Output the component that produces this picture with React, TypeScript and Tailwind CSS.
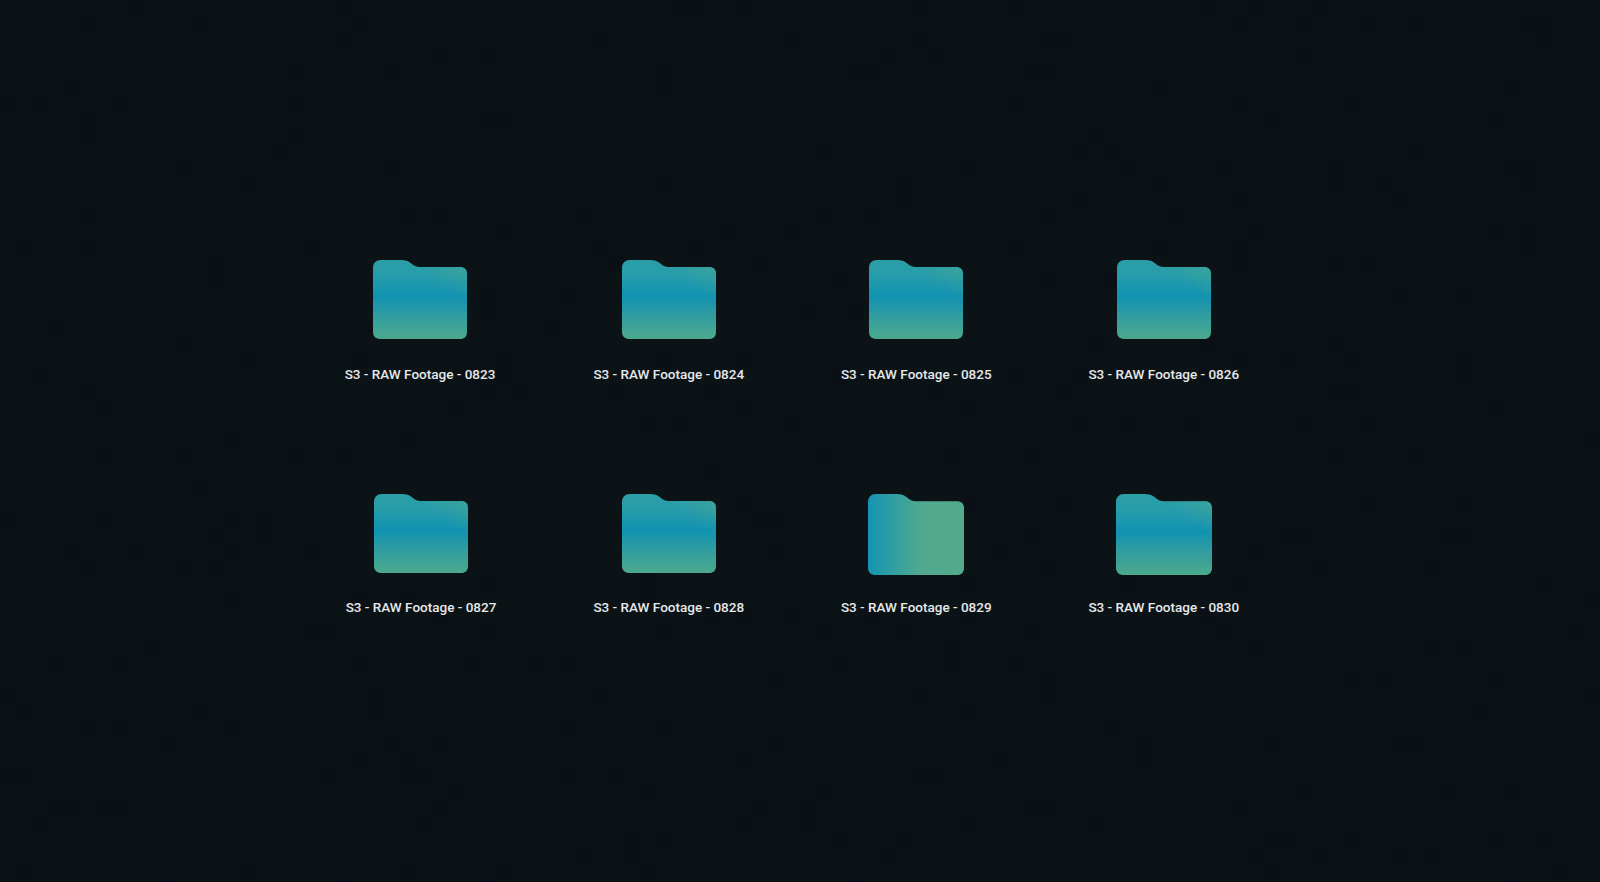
const font = { fontFamily: "Roboto, sans-serif" };

type Item = {
  label: string;
  columnClass: string;
  width: number;
  height: number;
  variant?: "side";
};

function Folder({ id, width, height, variant }: { id: string; width: number; height: number; variant?: "side" }) {
  const shape =
    "M8 0H28C32.5 0 35 1 38 3.2C41 5.6 43 7 47 7H87C91.5 7 94 9.5 94 13.5V71C94 75.5 91.5 78 87 78H8C3 78 0 75.5 0 71V8C0 3 3 0 8 0Z";
  return (
    <svg width={width} height={height} viewBox="0 0 94 78" preserveAspectRatio="none" className="block">
      <defs>
        {variant === "side" ? (
          <linearGradient id={id} x1="0" y1="0" x2="1" y2="0">
            <stop offset="0" stopColor="#1594b2" />
            <stop offset="0.22" stopColor="#2c9ca4" />
            <stop offset="0.55" stopColor="#50a98e" />
            <stop offset="1" stopColor="#53aa8c" />
          </linearGradient>
        ) : (
          <linearGradient id={id} x1="0" y1="0" x2="0" y2="1">
            <stop offset="0" stopColor="#2a9fa8" />
            <stop offset="0.18" stopColor="#289daa" />
            <stop offset="0.46" stopColor="#1192b2" />
            <stop offset="0.72" stopColor="#329d9f" />
            <stop offset="1" stopColor="#4ca98c" />
          </linearGradient>
        )}
        <linearGradient id={`${id}-glow`} x1="1" y1="0" x2="0.72" y2="0.3">
          <stop offset="0" stopColor="#53aa8c" stopOpacity="0.5" />
          <stop offset="1" stopColor="#53aa8c" stopOpacity="0" />
        </linearGradient>
      </defs>
      <path d={shape} fill={`url(#${id})`} />
      {variant !== "side" && <path d={shape} fill={`url(#${id}-glow)`} />}
    </svg>
  );
}

const rowOne: Item[] = [
  { label: "S3 - RAW Footage - 0823", columnClass: "w-[250px]", width: 94, height: 79 },
  { label: "S3 - RAW Footage - 0824", columnClass: "w-[247.5px]", width: 94, height: 79 },
  { label: "S3 - RAW Footage - 0825", columnClass: "w-[247.5px]", width: 94, height: 79 },
  { label: "S3 - RAW Footage - 0826", columnClass: "w-[247.5px]", width: 94, height: 79 },
];

const rowTwo: Item[] = [
  { label: "S3 - RAW Footage - 0827", columnClass: "ml-[2px] w-[248px]", width: 94, height: 79 },
  { label: "S3 - RAW Footage - 0828", columnClass: "w-[247.5px]", width: 94, height: 79 },
  { label: "S3 - RAW Footage - 0829", columnClass: "w-[247.5px]", width: 96, height: 81, variant: "side" },
  { label: "S3 - RAW Footage - 0830", columnClass: "w-[247.5px]", width: 96, height: 81 },
];

function Row({ items, prefix, labelClass }: { items: Item[]; prefix: string; labelClass: string }) {
  return (
    <div className="flex">
      {items.map((item, i) => (
        <div key={item.label} className={`flex flex-col items-center ${item.columnClass}`}>
          <div className="h-[80px] w-[96px] flex items-start justify-center">
            <Folder id={`${prefix}${i}`} width={item.width} height={item.height} variant={item.variant} />
          </div>
          <div className={`${labelClass} text-[13.5px] leading-[16px] font-medium text-[#e6e9ea] whitespace-nowrap`}>
            {item.label}
          </div>
        </div>
      ))}
    </div>
  );
}

// Faint blocky compression texture of the background.
function Texture() {
  const cells: { x: number; y: number }[] = [];
  let seed = 48271;
  for (let y = 0; y < 56; y++) {
    for (let x = 0; x < 100; x++) {
      seed = (seed * 16807) % 2147483647;
      if (seed % 100 < 7) cells.push({ x: x * 16, y: y * 16 });
    }
  }
  return (
    <svg width={1600} height={882} className="absolute inset-0 block">
      {cells.map((c) => (
        <rect key={`${c.x}-${c.y}`} x={c.x} y={c.y} width={16} height={16} fill="#0a1016" />
      ))}
    </svg>
  );
}

export default function App() {
  return (
    <div className="relative h-[882px] w-[1600px] overflow-hidden bg-[#0c1317]" style={font}>
      <Texture />
      <div className="relative flex flex-col gap-[112px] pt-[260px] pl-[295px]">
        <Row items={rowOne} prefix="a" labelClass="mt-[26px]" />
        <Row items={rowTwo} prefix="b" labelClass="mt-[25px]" />
      </div>
    </div>
  );
}
